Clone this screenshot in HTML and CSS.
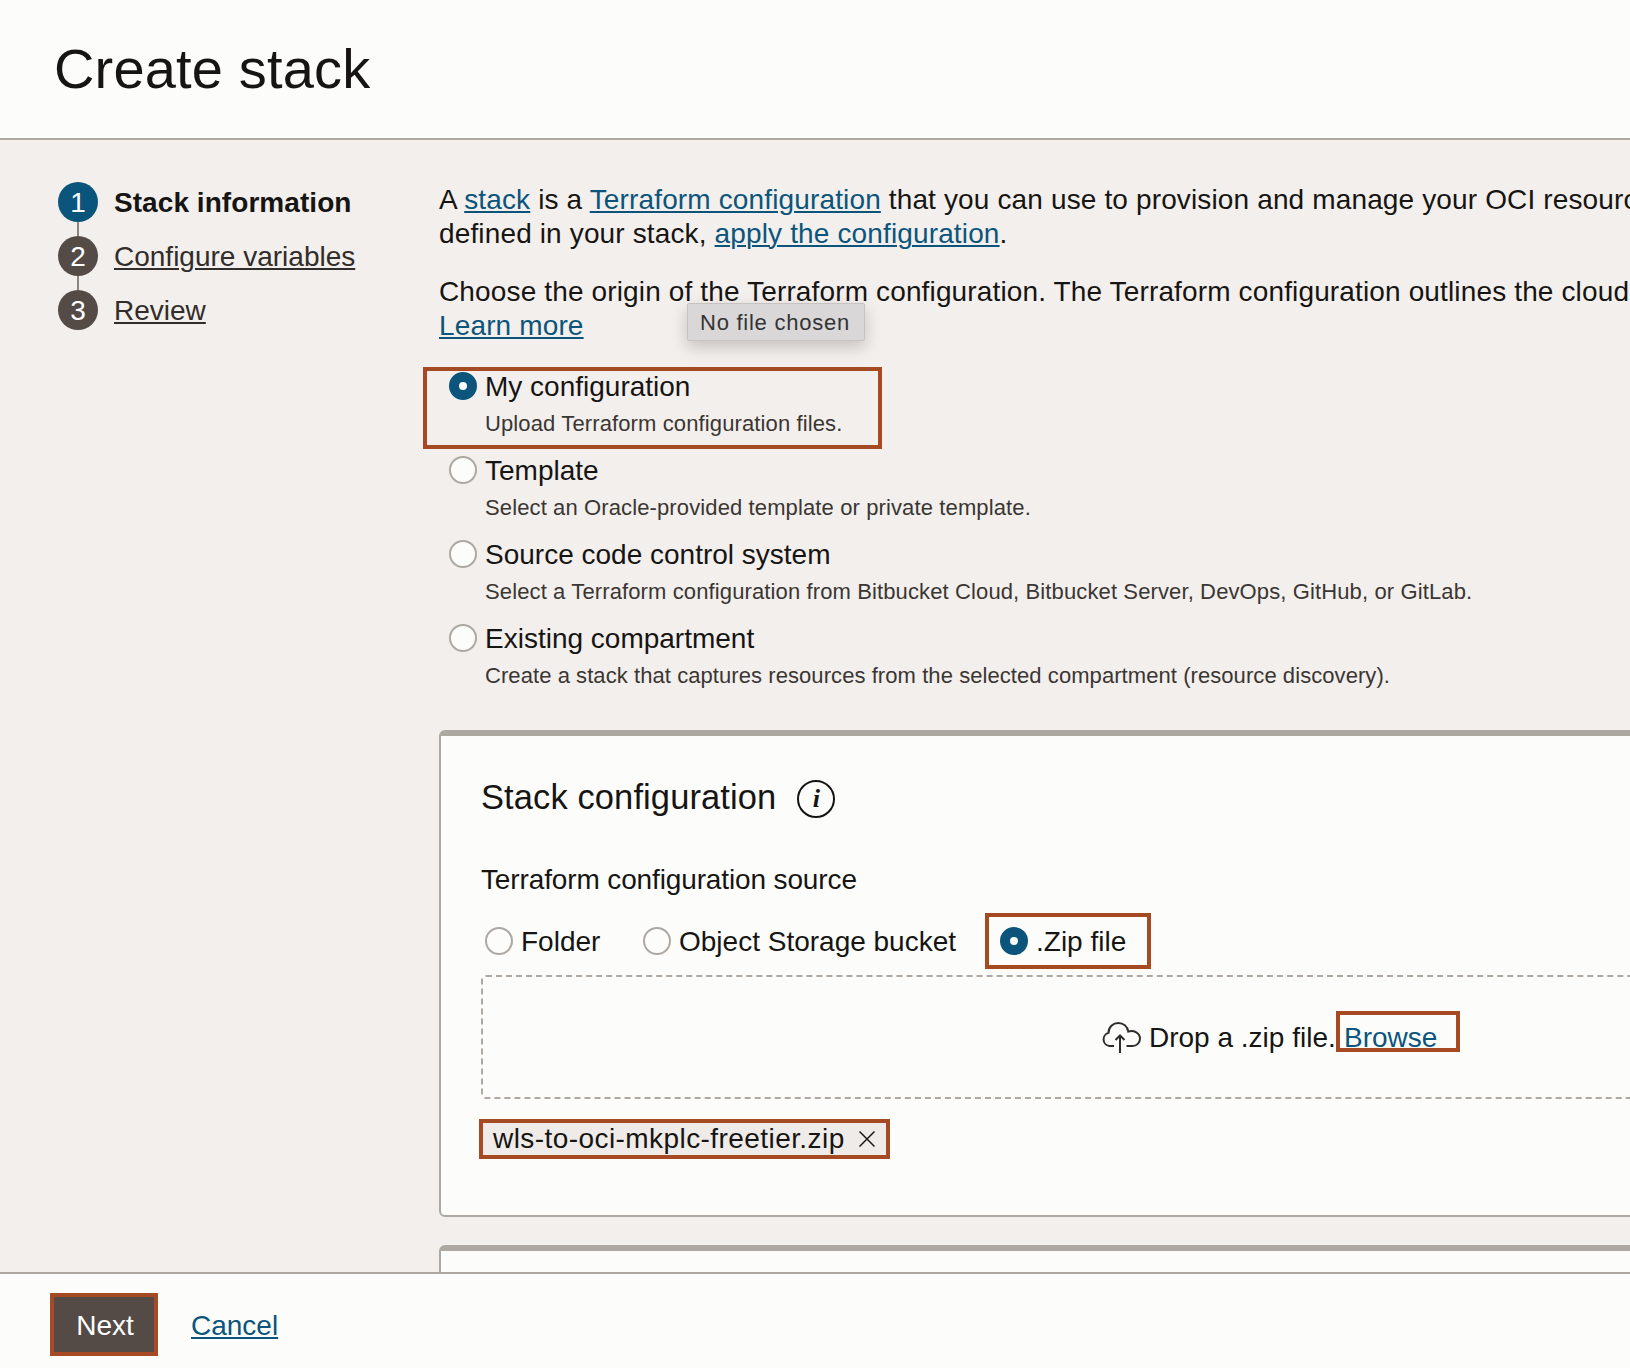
FILE: index.html
```html
<!DOCTYPE html>
<html lang="en">
<head>
<meta charset="utf-8">
<title>Create stack</title>
<link rel="stylesheet" href="styles.css">
</head>
<body>
<div class="page">
  <header class="header"><h1 class="title">Create stack</h1></header>
  <div class="content">
    <nav class="steps">
      <div class="step step-current"><span class="num">1</span><span class="step-label">Stack information</span></div>
      <div class="step"><span class="num">2</span><a class="step-label">Configure variables</a></div>
      <div class="step"><span class="num">3</span><a class="step-label">Review</a></div>
    </nav>
    <main class="main">
      <p class="para para-intro">A <a class="link">stack</a> is a <a class="link">Terraform configuration</a> that you can use to provision and manage your OCI resources<br>defined in your stack, <a class="link">apply the configuration</a>.</p>
      <p class="para para-origin">Choose the origin of the Terraform configuration. The Terraform configuration outlines the cloud<br><a class="link">Learn more</a><span class="tooltip">No file chosen</span></p>
      <div class="options">
        <div class="option marked mark-option">
          <span class="radio radio-on"></span>
          <div class="option-text"><div class="label">My configuration</div><div class="desc">Upload Terraform configuration files.</div></div>
        </div>
        <div class="option">
          <span class="radio"></span>
          <div class="option-text"><div class="label">Template</div><div class="desc">Select an Oracle-provided template or private template.</div></div>
        </div>
        <div class="option">
          <span class="radio"></span>
          <div class="option-text"><div class="label">Source code control system</div><div class="desc">Select a Terraform configuration from Bitbucket Cloud, Bitbucket Server, DevOps, GitHub, or GitLab.</div></div>
        </div>
        <div class="option">
          <span class="radio"></span>
          <div class="option-text"><div class="label">Existing compartment</div><div class="desc desc-tight">Create a stack that captures resources from the selected compartment (resource discovery).</div></div>
        </div>
      </div>
      <section class="card">
        <div class="card-head">
          <h2 class="card-title">Stack configuration</h2>
          <span class="info">i</span>
        </div>
        <div class="source-label">Terraform configuration source</div>
        <div class="sources">
          <div class="source source-folder"><span class="radio"></span><span class="source-name">Folder</span></div>
          <div class="source source-bucket"><span class="radio"></span><span class="source-name">Object Storage bucket</span></div>
          <div class="source marked mark-zip"><span class="radio radio-on"></span><span class="source-name">.Zip file</span></div>
        </div>
        <div class="dropzone">
          <svg class="cloud" viewBox="0 0 40 36" width="40" height="36" fill="none" stroke="#2f2c2a" stroke-width="2">
            <path d="M13 27H8.300a6.700 6.700 0 0 1-.8-13.100C7.500 8 12 4 17.300 4c5 0 9 3.300 10 8.600C33 10.800 39 14.300 39 19.600c0 4.200-3.300 7.400-7.600 7.400H25.500"/>
            <path d="M19 34V16.500M14.500 21l4.500-4.500 4.500 4.500"/>
          </svg>
          <span class="drop-text">Drop a .zip file.</span>
          <a class="link browse marked mark-browse">Browse</a>
        </div>
        <div class="chip marked mark-chip">
          <span class="chip-name">wls-to-oci-mkplc-freetier.zip</span>
          <svg class="close" viewBox="0 0 16 16" width="16" height="16" stroke="#1a1816" stroke-width="1.500"><path d="M.5.5l15 15M15.500.5l-15 15"/></svg>
        </div>
      </section>
      <section class="card card-next"></section>
    </main>
  </div>
  <footer class="footer">
    <button class="next">Next</button>
    <a class="link">Cancel</a>
  </footer>
</div>
</body>
</html>
```
FILE: styles.css
```css
*, *::before, *::after { box-sizing: border-box; }
body {
  margin: 0;
  font-family: "Liberation Sans", Arial, sans-serif;
  font-size: 28px;
  line-height: 34px;
  color: #161513;
}
.page {
  display: flex;
  flex-direction: column;
  width: 1630px;
  height: 1368px;
  overflow: hidden;
  background: #f3efec;
}
.header {
  flex: none;
  height: 140px;
  padding: 36px 0 0 54px;
  background: #fcfdfb;
  border-bottom: 2px solid #aea8a2;
}
.title {
  margin: 0;
  font-size: 56px;
  line-height: 66px;
  font-weight: 400;
  letter-spacing: .17px;
}
.content {
  flex: 1;
  min-height: 0;
  display: flex;
  padding: 42px 0 0 58px;
  overflow: hidden;
}
.steps {
  flex: none;
  width: 381px;
  display: flex;
  flex-direction: column;
  gap: 14px;
}
.step {
  position: relative;
  display: flex;
  align-items: center;
  gap: 16px;
  height: 40px;
}
.step + .step::before {
  content: "";
  position: absolute;
  left: 19px;
  top: -14px;
  width: 2px;
  height: 14px;
  background: #8b8580;
}
.num {
  width: 40px;
  height: 40px;
  border-radius: 50%;
  background: #544b47;
  color: #fff;
  text-align: center;
  line-height: 41px;
}
.step-label { padding-top: 2px; }
a.step-label {
  color: #312d2a;
  text-decoration: underline;
  text-decoration-thickness: 2px;
  text-underline-offset: 2px;
}
.step-current .num { background: #0b557c; }
.step-current .step-label {
  font-weight: 700;
  letter-spacing: .06px;
}
.main {
  flex: none;
  width: 1660px;
  padding-top: 1px;
  white-space: nowrap;
}
.para {
  margin: 0 0 24px;
  letter-spacing: .14px;
}
.para-origin {
  position: relative;
  margin-bottom: 26px;
}
.link {
  color: #0b557c;
  text-decoration: underline;
  text-decoration-thickness: 2px;
  text-underline-offset: 2px;
}
.tooltip {
  position: absolute;
  left: 248px;
  top: 28px;
  width: 178px;
  height: 38px;
  padding-left: 12px;
  font-size: 22px;
  line-height: 38px;
  letter-spacing: .75px;
  color: #343434;
  background: #d9d7d8;
  border: 1px solid #c6c3c2;
  border-radius: 2px;
  box-shadow: 0 6px 16px rgba(0, 0, 0, .2);
}
.options {
  display: flex;
  flex-direction: column;
  gap: 16px;
  padding-left: 10px;
}
.option {
  display: flex;
  align-items: flex-start;
  gap: 8px;
}
.option > .radio { margin-top: 3px; }
.radio {
  flex: none;
  width: 28px;
  height: 28px;
  border: 2px solid #aea8a2;
  border-radius: 50%;
  background: #fcfdfb;
}
.radio-on { border: 10px solid #0b557c; }
.label { padding-top: 1px; }
.desc {
  margin-top: 7px;
  font-size: 22px;
  line-height: 26px;
  letter-spacing: .12px;
  color: #3a3633;
}
.desc-tight { letter-spacing: .07px; }
.marked { position: relative; }
.marked::after {
  content: "";
  position: absolute;
  border: 4px solid #a54a22;
}
.mark-option::after { left: -26px; top: -2px; width: 459px; height: 82px; }
.mark-zip::after { left: -15px; top: -11px; width: 166px; height: 56px; }
.mark-browse::after { left: -8px; top: -10px; width: 124px; height: 41px; }
.mark-chip::after { left: -2px; top: -2px; width: 411px; height: 40px; }
.card {
  height: 487px;
  margin-top: 41px;
  padding: 41px 40px 0;
  background: #fcfdfb;
  border: 2px solid #aea8a2;
  border-top-width: 6px;
  border-radius: 6px;
}
.card-next { margin-top: 28px; }
.card-head {
  display: flex;
  align-items: center;
  gap: 21px;
  height: 44px;
}
.card-title {
  margin: 0;
  padding-bottom: 4px;
  font-size: 34.5px;
  line-height: 40px;
  font-weight: 400;
  letter-spacing: .1px;
}
.info {
  width: 38px;
  height: 38px;
  border: 2px solid #161513;
  border-radius: 50%;
  font: italic 700 26px/33px "Liberation Serif", serif;
  text-align: center;
}
.source-label {
  margin-top: 42px;
  letter-spacing: -.13px;
}
.sources {
  display: flex;
  height: 34px;
  margin-top: 27px;
  padding-left: 4px;
}
.source {
  display: flex;
  align-items: center;
  gap: 8px;
}
.source-name { padding-top: 2px; }
.source-folder { width: 158px; }
.source-bucket { width: 357px; }
.dropzone {
  display: flex;
  align-items: center;
  height: 124px;
  margin-top: 17px;
  padding-left: 618px;
  border: 2px dashed #aea8a2;
  border-radius: 5px;
}
.cloud { flex: none; }
.drop-text {
  width: 195px;
  margin-left: 8px;
  padding-top: 2px;
}
.browse { margin-top: 2px; }
.chip {
  display: flex;
  align-items: center;
  justify-content: space-between;
  width: 409px;
  height: 36px;
  margin-top: 22px;
  padding: 0 15px 0 12px;
  border-radius: 4px;
  background: #efebe8;
}
.chip-name { letter-spacing: .43px; }
.footer {
  flex: none;
  display: flex;
  gap: 33px;
  height: 96px;
  padding: 19px 0 0 50px;
  background: #fcfdfb;
  border-top: 2px solid #aea8a2;
}
.next {
  width: 108px;
  height: 63px;
  padding: 2px 0 0 2px;
  border: 4px solid #a54a22;
  background: #544b47;
  color: #fff;
  font: inherit;
}
.footer .link { line-height: 66px; }
```
